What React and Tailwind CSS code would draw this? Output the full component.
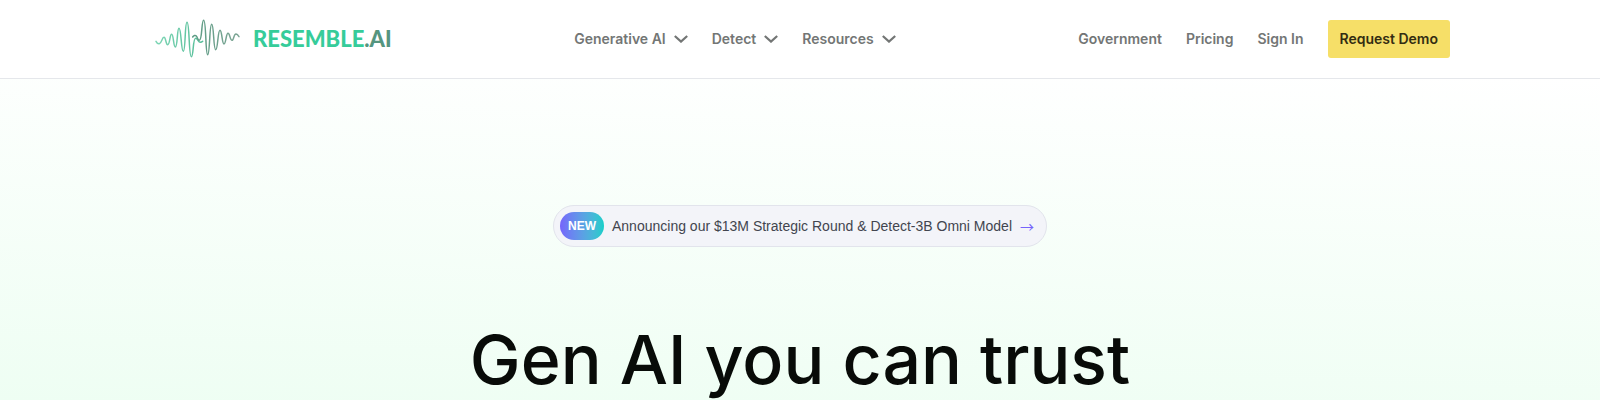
import React from 'react';

const menus = ['Generative AI', 'Detect', 'Resources'];

const links = [
  { label: 'Government', href: '/government' },
  { label: 'Pricing', href: '/pricing' },
  { label: 'Sign In', href: '/sign-in' },
];

function Waveform() {
  return (
    <svg viewBox="30 24 258 120" fill="none" strokeLinecap="round" strokeWidth="4.5" className="h-10 w-[86px]" aria-hidden="true">
      <defs>
        <linearGradient id="wave-left" gradientUnits="userSpaceOnUse" x1="30" y1="0" x2="175" y2="0">
          <stop offset="0" stopColor="#7fd6b6" />
          <stop offset="1" stopColor="#55bd98" />
        </linearGradient>
        <linearGradient id="wave-right" gradientUnits="userSpaceOnUse" x1="143" y1="0" x2="284" y2="0">
          <stop offset="0" stopColor="#5c9c84" />
          <stop offset="1" stopColor="#7fa696" />
        </linearGradient>
      </defs>
      <path
        stroke="url(#wave-left)"
        d="M33 91 C36 97 39 99 43 98 C50 97 51 79 57 79 C63 79 62 101 68 101 C75 101 74 70 80 70 C86 70 85 108 91 108 C98 108 96 52 102 52 C109 52 108 121 115 121 C122 121 119 34 126 34 C134 34 131 137 139 137 C146 137 143 82 152 82 C159 82 159 94 166 94 C169 94 171 93 173 91"
      />
      <path
        stroke="url(#wave-right)"
        d="M143 78 C146 73 151 72 154 75 C158 79 158 88 163 88 C172 88 169 28 176 28 C184 28 181 131 188 131 C195 131 193 40 200 40 C207 40 205 116 212 116 C219 116 218 58 225 58 C231 58 231 99 237 99 C243 99 243 67 249 67 C255 67 255 88 261 88 C267 88 266 68 273 69 C278 70 280 74 282 77"
      />
    </svg>
  );
}

function Chevron() {
  return (
    <svg viewBox="0 0 14 8" fill="none" stroke="currentColor" strokeWidth="2.2" className="h-2 w-[14px]" aria-hidden="true">
      <path d="M0.8 1 L7 6.6 L13.2 1" />
    </svg>
  );
}

export default function App() {
  return (
    <div className="min-h-screen overflow-hidden bg-white font-['Inter',sans-serif]">
      <header className="border-b border-gray-200 bg-white">
        <div className="mx-auto flex max-w-[1300px] items-center justify-between py-[19px]">
          <a href="/" className="flex items-center gap-3 pl-[5px]">
            <Waveform />
            <span className="font-['Lato',sans-serif] text-[22px] leading-7 font-black text-[#36cc9a]">
              RESEMBLE<span className="text-[#55957f]">.AI</span>
            </span>
          </a>

          <nav className="flex items-center gap-6">
            {menus.map(label => (
              <button key={label} type="button" className="flex items-center gap-2 text-sm font-semibold text-[#737675]">
                {label}
                <Chevron />
              </button>
            ))}
          </nav>

          <div className="flex items-center gap-6">
            {links.map(link => (
              <a key={link.label} href={link.href} className="text-sm font-semibold text-[#737675]">
                {link.label}
              </a>
            ))}
            <a href="/demo" className="rounded-[3px] bg-[#f6df68] px-3 py-[9px] text-sm font-semibold text-[#322d12]">
              Request Demo
            </a>
          </div>
        </div>
      </header>

      <main className="flex min-h-[322px] flex-col items-center bg-linear-182 from-white to-[#eefef3] pt-[126px]">
        <a
          href="/announcement"
          className="flex items-center gap-2 rounded-full border border-[#e2e4ec] bg-[#f3f4f9] py-[6px] pr-3 pl-[6px] font-['Liberation_Sans',sans-serif] text-sm text-[#42454f]"
        >
          <span className="rounded-full bg-linear-to-r from-[#7564fb] to-[#10cfc9] px-2 py-[6px] text-xs leading-4 font-bold text-white">NEW</span>
          <span>Announcing our $13M Strategic Round &amp; Detect-3B Omni Model</span>
          <span className="font-['Noto_Sans_CJK_JP',sans-serif] text-[#7564fb]">→</span>
        </a>
        <h1 className="mt-[76px] text-center text-[68px] leading-[72px] font-medium text-[#080b08]">Gen AI you can trust</h1>
      </main>
    </div>
  );
}
